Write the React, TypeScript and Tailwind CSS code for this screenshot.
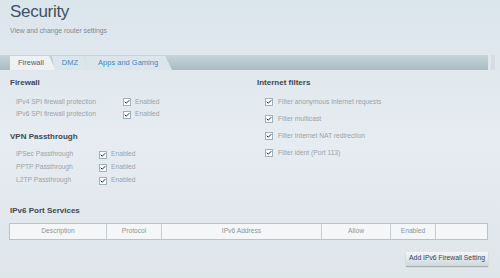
import { Check } from "lucide-react";

const firewallRows = ["IPv4 SPI firewall protection", "IPv6 SPI firewall protection"];
const vpnRows = ["IPSec Passthrough", "PPTP Passthrough", "L2TP Passthrough"];
const filters = [
  "Filter anonymous Internet requests",
  "Filter multicast",
  "Filter Internet NAT redirection",
  "Filter ident (Port 113)",
];

function Box() {
  return (
    <span className="inline-flex h-[8px] w-[8px] items-center justify-center border border-[#9fb0ba] bg-white">
      <Check className="h-[8px] w-[8px] text-[#1d2a33]" strokeWidth={4} />
    </span>
  );
}

export default function App() {
  return (
    <div
      className="h-[278px] w-[500px] overflow-hidden bg-gradient-to-b from-[#dbe5ec] via-[#e6ecf1] to-[#dfe6ea] text-[#9aa3a9]"
      style={{ fontFamily: '"Liberation Sans", Arial, sans-serif' }}
    >
      <div className="px-[10px] pt-[2px]">
        <h1 className="text-[17px] leading-[20px] tracking-[-0.3px] text-[#3e5262]">Security</h1>
        <p className="mt-[4px] text-[6.8px] leading-[10px] text-[#7d8a93]">View and change router settings</p>
      </div>

      <div className="mt-[19px] flex h-[15px] items-end">
        <div className="flex h-[15px] w-[488px] items-end bg-gradient-to-b from-[#c6d4da] to-[#a9bcc3] pl-[10px]">
          <div className="flex h-[14px] items-center bg-[#eef2f5] pl-[8px] pr-[12px] text-[7.5px] text-[#555e65] [clip-path:polygon(0_0,85%_0,100%_100%,0_100%)]">
            Firewall
          </div>
          <div className="-ml-[4px] flex h-[14px] items-center bg-[#dbe6ec] px-[10px] text-[7.5px] text-[#3e86c0] [clip-path:polygon(0_0,88%_0,100%_100%,8%_100%)]">
            DMZ
          </div>
          <div className="-ml-[4px] flex h-[14px] items-center bg-[#dbe6ec] px-[14px] text-[7.5px] text-[#3e86c0] [clip-path:polygon(0_0,92%_0,100%_100%,4%_100%)]">
            Apps and Gaming
          </div>
        </div>
        <div className="ml-[3px] h-[15px] w-[4px] bg-[#d4dde2]" />
      </div>

      <div className="flex px-[10px] pt-[7px]">
        <div className="w-[247px]">
          <h2 className="text-[8px] font-bold leading-[12px] text-[#3d4852]">Firewall</h2>
          <div className="mt-[8px] flex flex-col gap-[2.5px] pl-[6px]">
            {firewallRows.map((r) => (
              <div key={r} className="flex h-[10px] items-center text-[6.7px]">
                <span className="w-[107px]">{r}</span>
                <Box />
                <span className="ml-[4px]">Enabled</span>
              </div>
            ))}
          </div>

          <h2 className="mt-[11px] text-[8px] font-bold leading-[12px] text-[#3d4852]">VPN Passthrough</h2>
          <div className="mt-[7px] flex flex-col gap-[3px] pl-[6px]">
            {vpnRows.map((r) => (
              <div key={r} className="flex h-[10px] items-center text-[6.7px]">
                <span className="w-[83px]">{r}</span>
                <Box />
                <span className="ml-[4px]">Enabled</span>
              </div>
            ))}
          </div>
        </div>

        <div className="flex-1">
          <h2 className="text-[8px] font-bold leading-[12px] text-[#3d4852]">Internet filters</h2>
          <div className="mt-[8px] flex flex-col gap-[7px] pl-[8px]">
            {filters.map((f) => (
              <div key={f} className="flex h-[10px] items-center text-[6.7px]">
                <Box />
                <span className="ml-[5px]">{f}</span>
              </div>
            ))}
          </div>
        </div>
      </div>

      <div className="px-[9px] pt-[19px]">
        <h2 className="pl-[1px] text-[8px] font-bold leading-[12px] text-[#3d4852]">IPv6 Port Services</h2>
        <div className="mt-[6px] flex h-[17px] w-[479px] border border-[#b9c4ca] bg-[#f4f6f8] text-[6.7px] text-[#8d969c]">
          <div className="flex w-[97px] items-center justify-center border-r border-[#c4cdd2]">Description</div>
          <div className="flex w-[55px] items-center justify-center border-r border-[#c4cdd2]">Protocol</div>
          <div className="flex w-[160px] items-center justify-center border-r border-[#c4cdd2]">IPv6 Address</div>
          <div className="flex w-[69px] items-center justify-center border-r border-[#c4cdd2]">Allow</div>
          <div className="flex w-[45px] items-center justify-center border-r border-[#c4cdd2]">Enabled</div>
          <div className="flex-1" />
        </div>
        <div className="mt-[12px] flex w-[479px] justify-end">
          <button className="h-[14px] bg-gradient-to-b from-[#f3f6f8] to-[#cdd8de] px-[3px] text-[6.8px] text-[#3a444c] shadow-[0_1px_1px_rgba(0,0,0,0.25)]">
            Add IPv6 Firewall Setting
          </button>
        </div>
      </div>
    </div>
  );
}
